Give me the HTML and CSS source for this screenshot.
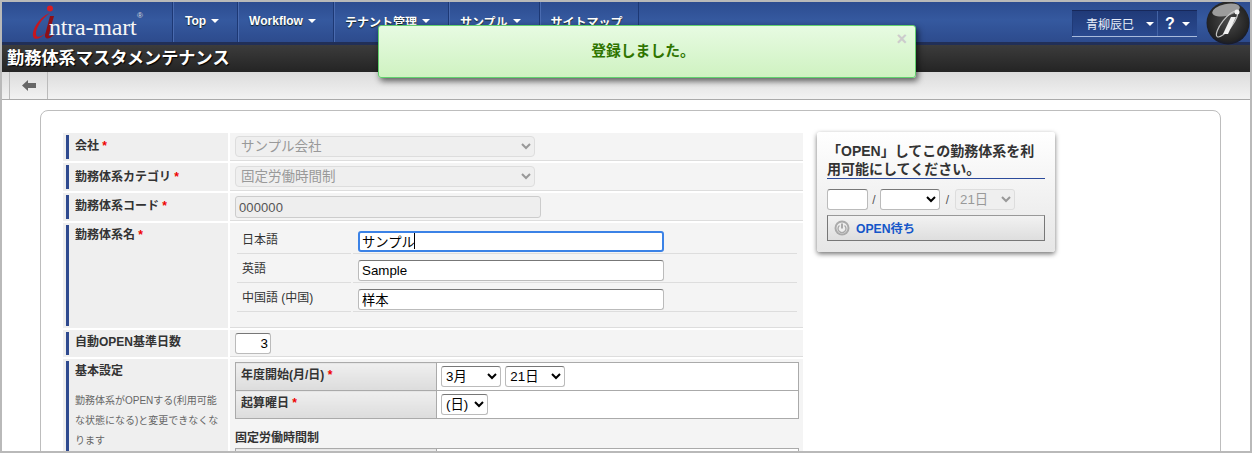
FILE: index.html
```html
<!DOCTYPE html>
<html lang="ja">
<head>
<meta charset="utf-8">
<title>勤務体系マスタメンテナンス</title>
<link rel="stylesheet" href="styles.css">
</head>
<body>
<div class="frame">
  <header class="nav">
    <div class="logo">
      <svg class="logo-mark" width="40" height="40" viewBox="0 0 40 40" aria-hidden="true">
        <path d="M21 9 C12 12 3 24 4 32 C5 37 11 35 17 29 C12 33 8 34 7 31 C6 25 13 14 21 9Z" fill="#c8161d"/>
        <circle cx="21" cy="4.500" r="3" fill="#d81e25"/>
        <path d="M21 12 L25 12 L20 30 C19 33 21 33 24 30 L24.500 31 C21 35 15.500 36 16 31 Z" fill="#8e0f17"/>
      </svg>
      <span class="logo-text">ntra-mart</span><span class="logo-reg">®</span>
    </div>
    <nav class="menu">
      <a class="menu-item">Top<i class="caret"></i></a>
      <a class="menu-item">Workflow<i class="caret"></i></a>
      <a class="menu-item">テナント管理<i class="caret"></i></a>
      <a class="menu-item">サンプル<i class="caret"></i></a>
      <a class="menu-item">サイトマップ</a>
    </nav>
    <div class="user">
      <div class="user-name">青柳辰巳<i class="caret"></i></div>
      <div class="user-help"><b>?</b><i class="caret"></i></div>
    </div>
    <svg class="globe" width="44" height="44" viewBox="0 0 44 44" aria-hidden="true">
      <defs>
        <radialGradient id="gl" cx="50%" cy="45%" r="55%"><stop offset="0" stop-color="#4a4a4a"/><stop offset="0.85" stop-color="#242424"/><stop offset="1" stop-color="#15192a"/></radialGradient>
      </defs>
      <circle cx="22" cy="22" r="21.500" fill="url(#gl)"/>
      <ellipse cx="20" cy="9" rx="14" ry="6" transform="rotate(-12 20 9)" fill="#9c9c9c"/>
      <ellipse cx="21" cy="23" rx="5" ry="16" transform="rotate(38 21 23)" fill="none" stroke="#c4c4c4" stroke-width="1.200"/>
      <path d="M25 16 L30 16 L22 33 L17 33Z" fill="#f0f0f0"/>
      <circle cx="31" cy="11" r="2.500" fill="#f0f0f0"/>
    </svg>
  </header>
  <div class="titlebar"><h1>勤務体系マスタメンテナンス</h1></div>
  <div class="toolbar">
    <div class="back">
      <svg width="14" height="11" viewBox="0 0 14 11" aria-hidden="true"><path d="M0 5.500 L6 0 L6 3 L14 3 L14 8 L6 8 L6 11Z" fill="#666"/></svg>
    </div>
  </div>
  <main class="main">
    <section class="card">
      <div class="form">
        <div class="row r28">
          <div class="lab"><div class="lab-in">会社 <em>*</em></div></div>
          <div class="val"><select class="sel-wide" disabled><option>サンプル会社</option></select></div>
        </div>
        <div class="row r28">
          <div class="lab"><div class="lab-in lab-low">勤務体系カテゴリ <em>*</em></div></div>
          <div class="val"><select class="sel-wide" disabled><option>固定労働時間制</option></select></div>
        </div>
        <div class="row r27">
          <div class="lab"><div class="lab-in">勤務体系コード <em>*</em></div></div>
          <div class="val"><input class="code" value="000000" readonly></div>
        </div>
        <div class="row r104">
          <div class="lab"><div class="lab-in lab-high">勤務体系名 <em>*</em></div></div>
          <div class="val val-names">
            <div class="name-row">
              <div class="name-lab">日本語</div>
              <div class="name-val"><input class="txt focus" value="サンプル"><span class="text-caret"></span></div>
            </div>
            <div class="name-row">
              <div class="name-lab">英語</div>
              <div class="name-val"><input class="txt" value="Sample"></div>
            </div>
            <div class="name-row">
              <div class="name-lab">中国語 (中国)</div>
              <div class="name-val"><input class="txt" value="样本"></div>
            </div>
          </div>
        </div>
        <div class="row r26">
          <div class="lab"><div class="lab-in lab-high">自動OPEN基準日数</div></div>
          <div class="val"><input class="num" value="3"></div>
        </div>
        <div class="row r-last">
          <div class="lab"><div class="lab-in lab-high">基本設定
            <p class="note">勤務体系がOPENする(利用可能な状態になる)と変更できなくなります</p></div></div>
          <div class="val val-basic">
            <table class="grid">
              <tr><th>年度開始(月/日) <em>*</em></th><td><select class="s60"><option>3月</option></select> <select class="s60"><option>21日</option></select></td></tr>
              <tr><th>起算曜日 <em>*</em></th><td><select class="s46"><option>(日)</option></select></td></tr>
            </table>
            <h3 class="sub">固定労働時間制</h3>
            <table class="grid"><tr><th>&nbsp;</th><td>&nbsp;</td></tr></table>
          </div>
        </div>
      </div>
      <aside class="panel">
        <h2 class="panel-title">「OPEN」してこの勤務体系を利用可能にしてください。</h2>
        <div class="panel-date">
          <input class="year"><span class="slash">/</span><select class="mon"><option></option></select><span class="slash s2">/</span><select class="day" disabled><option>21日</option></select>
        </div>
        <button class="open-btn" type="button">
          <svg width="16" height="16" viewBox="0 0 16 16" aria-hidden="true"><circle cx="8" cy="8" r="7.500" fill="#aaa"/><circle cx="8" cy="8" r="5.500" fill="#eee"/><path d="M8 3.500 V8.500" stroke="#aaa" stroke-width="2"/><path d="M5.500 5.500 A4 4 0 1 0 10.500 5.500" fill="none" stroke="#aaa" stroke-width="1.400"/></svg>
          OPEN待ち
        </button>
      </aside>
    </section>
  </main>
  <div class="toast" role="alert">
    <span class="toast-text">登録しました。</span>
    <span class="toast-x">×</span>
  </div>
</div>
</body>
</html>
```

FILE: styles.css
```css
* { box-sizing: border-box; }
html, body { margin: 0; padding: 0; height: 100%; overflow: hidden; background: #fff; }
body { font-family: "Liberation Sans", "Noto Sans CJK JP", sans-serif; font-size: 13px; color: #333; }
.frame { position: relative; width: 1252px; height: 453px; border: 2px solid #b9b9b9; overflow: hidden; background: #fff; }

.nav { display: flex; align-items: stretch; height: 43px; background: linear-gradient(#2d4c90, #35599f 45%, #2d4b8d); border-bottom: 3px solid #212f57; }
.logo { position: relative; width: 170px; flex: none; }
.logo-mark { position: absolute; left: 27px; top: 2px; }
.logo-text { position: absolute; left: 47px; top: 13px; font-family: "Liberation Serif", serif; font-size: 24px; line-height: 24px; letter-spacing: -0.2px; color: #f6f6f6; white-space: nowrap; }
.logo-reg { position: absolute; left: 135px; top: 9px; font-size: 8px; line-height: 10px; color: #ddd; }
.menu { display: flex; border-left: 1px solid #1d3874; }
.menu-item { display: flex; align-items: center; padding: 0 13px 2px 11px; height: 40px; font-size: 12px; font-weight: bold; color: #fff; text-shadow: 0 1px 1px #122; border-right: 1px solid #1d3874; box-shadow: inset 1px 0 0 #4a6bb0; white-space: nowrap; }
.menu-item:first-child { padding-left: 12px; }
.menu-item:nth-child(2) { padding-right: 12px; }
.menu-item:last-child { padding-right: 15px; }
.caret { display: inline-block; width: 0; height: 0; margin: 0 5px 0 5px; border-left: 4px solid transparent; border-right: 4px solid transparent; border-top: 4px solid currentColor; }
.user { display: flex; margin: 8px 0 0 auto; height: 27px; border-top: 1px solid #17285a; border-bottom: 1px solid #a9bbdc; background: linear-gradient(#203a78, #2a4a90); color: #e6ecf8; }
.user-name { display: flex; align-items: center; width: 86px; padding-left: 13px; font-size: 12px; white-space: nowrap; border-left: 1px solid #203a78; border-right: 1px solid #4263a6; }
.user-name .caret { margin-left: 12px; margin-right: 0; color: #fff; }
.user-help { display: flex; align-items: center; width: 39px; padding-left: 7px; font-size: 16px; color: #fff; }
.user-help .caret { margin-left: 7px; margin-right: 0; }
.globe { flex: none; margin: -1px 0 0 9px; }

.titlebar { height: 27px; background: linear-gradient(#3c3c3c, #242424); padding-left: 5px; }
h1 { margin: 0; font-size: 17.200px; line-height: 27px; font-weight: bold; color: #fff; text-shadow: 1px 1px 1px #000; white-space: nowrap; }

.toolbar { display: flex; height: 28px; padding-left: 7px; background: linear-gradient(#dcdcdc, #f2f2f2); border-bottom: 1px solid #aaa; }
.back { display: flex; align-items: center; justify-content: center; width: 39px; border-left: 1px solid #bbb; border-right: 1px solid #bbb; }

.main { padding: 10px 29px 0 38px; }
.card { display: flex; align-items: flex-start; gap: 14px; height: 400px; border: 1px solid #bdbdbd; border-radius: 8px; padding: 22px 0 0 22px; }

.form { display: flex; flex-direction: column; gap: 2px; width: 740px; flex: none; }
.row { display: flex; gap: 2px; }
.r28 { height: 28px; }
.r27 { height: 28px; }
.r104 { height: 105px; }
.r26 { height: 27px; }
.r-last { height: 200px; }
.lab { width: 165px; flex: none; padding: 2px 3px; background: #efefef; }
.lab-in { height: 100%; border-left: 3px solid #2f4a8f; padding: 2px 0 0 6px; font-weight: bold; font-size: 12px; line-height: 18px; color: #333; }
.lab-low { padding-top: 3px; }
.lab-high { padding-top: 1px; }
em { color: #e00; font-style: normal; }
.val { flex: 1; padding: 3px 5px; background: #f4f4f4; border-bottom: 1px solid #ddd; }

select, input { font-family: "Liberation Sans", "Noto Sans CJK JP", sans-serif; font-size: 13.333px; color: #000; }
.sel-wide { display: block; width: 300px; height: 21px; padding-left: 1px; font-size: 13.500px; background: #efefef; border: 1px solid #ddd; border-radius: 4px; color: #999; opacity: 1; }
.code { display: block; width: 306px; height: 22px; padding: 0 3px; background: #eee; border: 1px solid #ccc; border-radius: 3px; font-size: 13px; letter-spacing: 0.1px; color: #555; outline: none; }

.val-names { padding: 2px 6px 0 7px; }
.name-row { display: flex; gap: 2px; height: 29px; }
.name-lab { width: 114px; padding: 6px 0 0 5px; font-size: 12px; line-height: 18px; border-bottom: 1px solid #ddd; }
.name-val { position: relative; flex: 1; padding: 6px 0 0 5px; border-bottom: 1px solid #ddd; }
.txt { display: block; width: 306px; height: 21px; padding: 0 3px; background: #fff; border: 1px solid #bbb; border-top-color: #777; border-radius: 3px; outline: none; }
.focus { border: 2px solid #3b82e6; padding: 0 2px; }
.text-caret { position: absolute; left: 61px; top: 8px; width: 1px; height: 16px; background: #000; }

.num { display: block; width: 36px; height: 21px; padding: 0 2px; text-align: right; background: #fff; border: 1px solid #bbb; border-top-color: #777; border-radius: 3px; outline: none; }

.note { margin: 11px 0 0; font-size: 10px; font-weight: normal; line-height: 20px; color: #666; }
.val-basic { padding: 3px 4px 0 5px; }
.grid { width: 564px; border-collapse: collapse; }
.grid th, .grid td { height: 28px; border: 1px solid #aaa; padding: 0; font-size: 12px; }
.grid th { width: 201px; padding: 0 0 6px 5px; text-align: left; background: linear-gradient(#efefef, #dcdcdc); color: #333; }
.grid td { padding: 0 0 1px 4px; background: #fff; }
.grid select { height: 21px; border: 1px solid #bbb; border-top-color: #777; border-radius: 3px; background: #fff; vertical-align: middle; }
.s60 { width: 60px; }
.s60 + .s60 { margin-left: 1px; }
.s46 { width: 47px; }
.sub { margin: 12px 0 2px; font-size: 12px; line-height: 15px; font-weight: bold; color: #333; }

.panel { width: 238px; height: 120px; padding: 10px 10px 0 10px; flex: none; border-radius: 3px; background: linear-gradient(#fff, #e6e6e6); box-shadow: 0 2px 5px rgba(0,0,0,.55); margin-top: -1px; }
.panel-title { margin: 0; font-size: 14px; line-height: 18px; font-weight: bold; color: #333; border-bottom: 1px solid #2b4a9b; }
.panel-date { display: flex; align-items: center; margin-top: 10px; height: 21px; }
.year { width: 41px; height: 21px; background: #fff; border: 1px solid #bbb; border-top-color: #777; border-radius: 3px; outline: none; }
.slash { width: 12px; font-size: 12px; text-align: center; color: #555; }
.s2 { width: 15px; }
.mon { width: 60px; height: 21px; background: #fff; border: 1px solid #bbb; border-top-color: #777; border-radius: 3px; }
.day { width: 60px; height: 21px; background: #efefef; border: 1px solid #ddd; border-radius: 3px; color: #999; opacity: 1; }
.open-btn { display: flex; align-items: center; gap: 6px; width: 218px; height: 26px; margin-top: 5px; padding: 0 0 0 6px; font-family: inherit; font-size: 12.200px; font-weight: bold; color: #1556c9; background: linear-gradient(#f2f2f2, #dedede); border: 1px solid #777; border-top-color: #999; }

.toast { position: absolute; left: 376px; top: 23px; width: 538px; height: 53px; display: flex; align-items: center; justify-content: center; padding: 0 8px 5px 0; border: 1px solid #62d06e; border-radius: 3px; background: linear-gradient(#e7fbe2, #cff2c1); box-shadow: 2px 3px 6px rgba(0,0,0,.6); }
.toast-text { font-size: 14.800px; font-weight: bold; color: #2f7500; }
.toast-x { position: absolute; right: 8px; top: 4px; font-size: 18px; line-height: 18px; font-weight: bold; color: #ccc; }
```
